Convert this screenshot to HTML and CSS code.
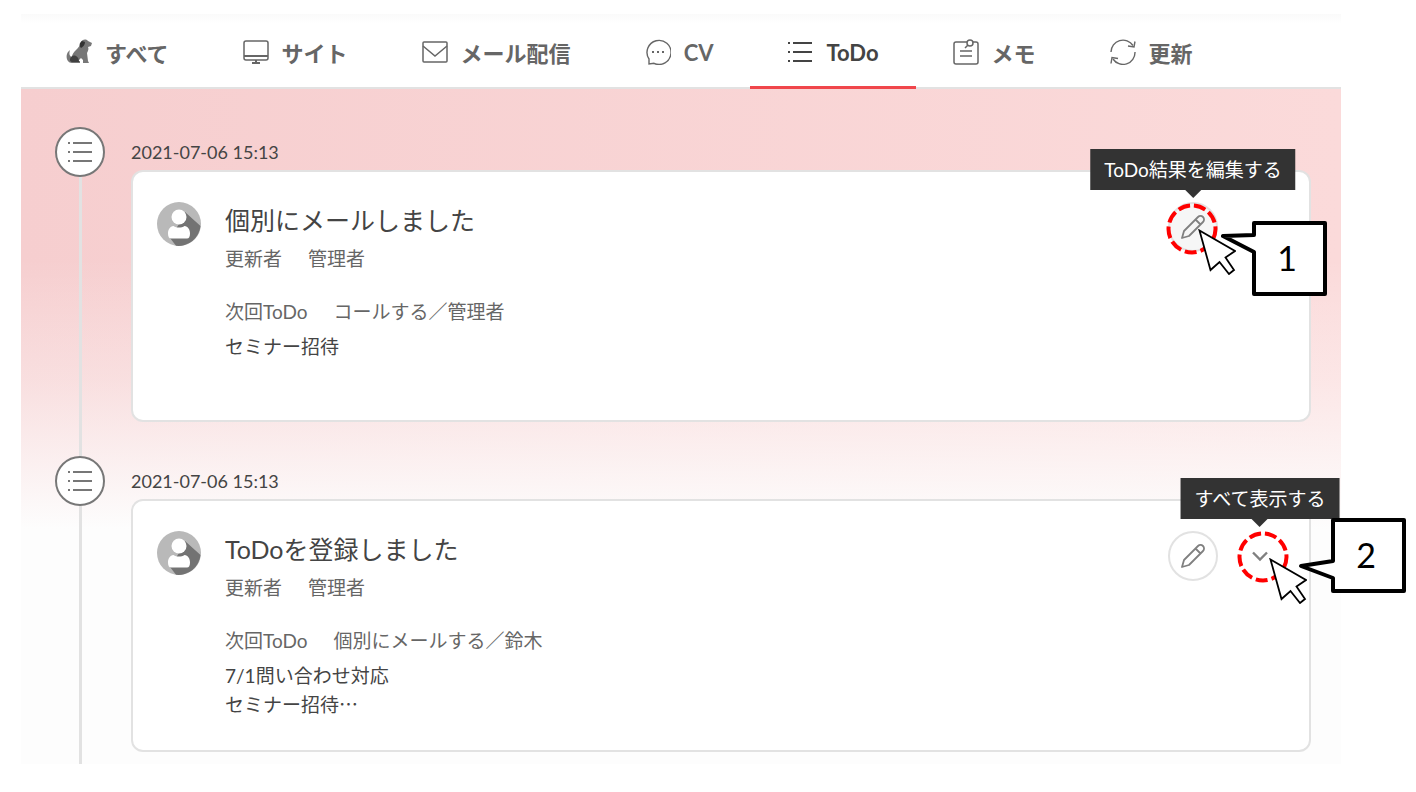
FILE: index.html
```html
<!DOCTYPE html>
<html lang="ja">
<head>
    <meta charset="UTF-8">
    <meta name="viewport" content="width=device-width, initial-scale=1.0">
    <title>ToDo</title>
    <link rel="stylesheet" href="styles.css">
</head>
<body>
    <!-- shared icons -->
    <svg class="sprite" aria-hidden="true">
        <symbol id="icon-list" viewBox="0 0 26 26">
            <path d="M1 4h2M1 13h2M1 22h2M6 4h19M6 13h19M6 22h19" fill="none" stroke="currentColor" stroke-width="2"/>
        </symbol>
        <symbol id="icon-pencil" viewBox="0 0 26 26">
            <path d="M2 24l2-7L18 3a3.2 3.2 0 0 1 5 5L9 22zM15.500 5.500l5 5" fill="none" stroke="currentColor" stroke-width="1.800" stroke-linejoin="round"/>
        </symbol>
        <symbol id="icon-user" viewBox="0 0 44 44">
            <circle cx="22" cy="22" r="22" fill="#b9b9b9"/>
            <path d="M28 10L43.500 24A22 22 0 0 1 19 43.800L13 36L22 22z" fill="#737373"/>
            <circle cx="22" cy="15" r="7.500" fill="#fff"/>
            <path d="M11 31.500c0-4 2-7 5.500-7.500 3 2 8 2 11 0 3.500.500 5.500 3.500 5.500 7.500 0 3-1 5-3 5H14c-2 0-3-2-3-5z" fill="#fff"/>
        </symbol>
        <symbol id="icon-cursor" viewBox="0 0 38 46">
            <path d="M1.500 1.500L37 22 27.500 28.500 36 41 31 45 21.500 33 12.500 41z" fill="#fff" stroke="#000" stroke-width="1.800"/>
        </symbol>
    </svg>

    <main class="panel">
        <nav class="tabs">
            <a class="tab" href="#all">
                <svg class="tab-icon" viewBox="0 0 26 26">
                    <path d="M3 12C-1 15 0 24 6 24h8v-2h-2l3-3 2 2v3h6l-1-2-1-8c1-2 2-4 1-6l3-1 1-3-4-2c-2-2-5-2-7 1-1 4-3 6-5 8-2 2-4 4-4 7-3-1-3-4-2-7z" fill="#777"/>
                    <path d="M16 2c-3 2-3 5-1 7 2-1 4-3 4-6z" fill="#333"/>
                    <path d="M5 18c3-3 8-1 8 5H7c-3 0-4-2-2-5z" fill="#404040"/>
                </svg>
                すべて
            </a>
            <a class="tab" href="#site">
                <svg class="tab-icon" viewBox="0 0 26 26" fill="none" stroke="currentColor" stroke-width="1.500">
                    <rect x="1" y="2" width="24" height="19" rx="2"/>
                    <path d="M1 17h24M9 24h8M13 21v3" stroke-width="2"/>
                </svg>
                サイト
            </a>
            <a class="tab" href="#mail">
                <svg class="tab-icon" viewBox="0 0 26 26" fill="none" stroke="currentColor" stroke-width="1.500">
                    <rect x="1" y="3" width="24" height="20" rx="1"/>
                    <path d="M1 7l12 10L25 7"/>
                </svg>
                メール配信
            </a>
            <a class="tab" href="#cv">
                <svg class="tab-icon" viewBox="0 0 26 26" fill="none" stroke="currentColor" stroke-width="1.400">
                    <path d="M4 25v-5A12 12 0 1 1 9 24.300z"/>
                    <path d="M7 13h2M12 13h2M17 13h2" stroke-width="2"/>
                </svg>
                CV
            </a>
            <a class="tab tab-active" href="#todo" aria-current="page">
                <svg class="tab-icon"><use href="#icon-list"/></svg>
                ToDo
            </a>
            <a class="tab" href="#memo">
                <svg class="tab-icon" viewBox="0 0 26 26" fill="none" stroke="currentColor" stroke-width="1.500">
                    <path d="M14 3H3a2 2 0 0 0-2 2v18a2 2 0 0 0 2 2h20a2 2 0 0 0 2-2V5a2 2 0 0 0-2-2h-3"/>
                    <circle cx="17" cy="4" r="3"/>
                    <path d="M15 6l-3 3M7 12h12M7 17h12"/>
                </svg>
                メモ
            </a>
            <a class="tab" href="#update">
                <svg class="tab-icon" viewBox="0 0 26 26" fill="none" stroke="currentColor" stroke-width="1.400">
                    <path d="M1 13A12 12 0 0 1 23 6.500M25 13A12 12 0 0 1 3 20"/>
                    <path d="M25 2.500l-1 5.500-6-1M1 24.500l1-6 6 1"/>
                </svg>
                更新
            </a>
        </nav>

        <ol class="timeline">
            <li class="entry">
                <div class="marker">
                    <span class="marker-dot"><svg class="marker-icon"><use href="#icon-list"/></svg></span>
                </div>
                <div class="entry-body">
                    <time class="entry-date" datetime="2021-07-06T15:13">2021-07-06 15:13</time>
                    <article class="card">
                        <svg class="avatar" aria-hidden="true"><use href="#icon-user"/></svg>
                        <div class="card-text">
                            <h2 class="card-title">個別にメールしました</h2>
                            <p class="card-meta"><span>更新者</span><span>管理者</span></p>
                            <p class="card-meta card-next"><span>次回ToDo</span><span>コールする／管理者</span></p>
                            <p class="card-note">セミナー招待</p>
                        </div>
                        <div class="actions">
                            <div class="action">
                                <button class="action-button action-hover" type="button" aria-labelledby="tip-edit">
                                    <svg class="action-icon"><use href="#icon-pencil"/></svg>
                                </button>
                                <span class="tooltip" id="tip-edit" role="tooltip">ToDo結果を編集する</span>
                                <svg class="callout callout-edit" viewBox="0 0 168 100">
                                    <circle class="callout-ring" cx="29" cy="30" r="23.500"/>
                                    <use href="#icon-cursor" x="35" y="30" width="38" height="46"/>
                                    <path class="callout-box" d="M91 24h71v71H91V53L60 37l31-1z"/>
                                    <text class="callout-number" x="124" y="72">1</text>
                                </svg>
                            </div>
                        </div>
                    </article>
                </div>
            </li>

            <li class="entry">
                <div class="marker">
                    <span class="marker-dot"><svg class="marker-icon"><use href="#icon-list"/></svg></span>
                </div>
                <div class="entry-body">
                    <time class="entry-date" datetime="2021-07-06T15:13">2021-07-06 15:13</time>
                    <article class="card">
                        <svg class="avatar" aria-hidden="true"><use href="#icon-user"/></svg>
                        <div class="card-text">
                            <h2 class="card-title">ToDoを登録しました</h2>
                            <p class="card-meta"><span>更新者</span><span>管理者</span></p>
                            <p class="card-meta card-next"><span>次回ToDo</span><span>個別にメールする／鈴木</span></p>
                            <p class="card-note">7/1問い合わせ対応<br>セミナー招待<span class="ellipsis">…</span></p>
                        </div>
                        <div class="actions">
                            <div class="action">
                                <button class="action-button" type="button" aria-label="編集">
                                    <svg class="action-icon"><use href="#icon-pencil"/></svg>
                                </button>
                            </div>
                            <div class="action">
                                <button class="action-button action-plain" type="button" aria-labelledby="tip-more">
                                    <svg class="action-icon" viewBox="0 0 26 26">
                                        <path d="M6 9.500l7 7 7-7" fill="none" stroke="currentColor" stroke-width="2.400"/>
                                    </svg>
                                </button>
                                <span class="tooltip" id="tip-more" role="tooltip">すべて表示する</span>
                                <svg class="callout callout-more" viewBox="0 0 173 92">
                                    <circle class="callout-ring" cx="28" cy="41" r="23.500"/>
                                    <use href="#icon-cursor" x="34" y="42" width="38" height="46"/>
                                    <path class="callout-box" d="M98 4h71v71H98V62L66 50l32-5z"/>
                                    <text class="callout-number" x="131" y="52">2</text>
                                </svg>
                            </div>
                        </div>
                    </article>
                </div>
            </li>
        </ol>
    </main>
</body>
</html>
```

FILE: styles.css
```css
* {
    box-sizing: border-box;
}
body {
    margin: 0;
    padding: 14px 75px 29px 21px;
    background-color: #fff;
    color: #444;
    font-family: Lato, "Noto Sans CJK JP", sans-serif;
    font-size: 19px;
}
.sprite {
    position: absolute;
    width: 0;
    height: 0;
}
.tabs {
    display: flex;
    height: 75px;
    padding-left: 8px;
    border-bottom: 2px solid #e2e2e2;
    background: linear-gradient(#fafafa, #fff 10px);
}
.tab {
    display: flex;
    align-items: center;
    gap: 13px;
    height: 75px;
    padding: 4px 37px 0;
    border-bottom: 3px solid transparent;
    color: #666;
    font-size: 22px;
    font-weight: bold;
    text-decoration: none;
    white-space: nowrap;
}
.tab-active {
    border-bottom-color: #f0464b;
    color: #444;
}
.tab-icon {
    width: 26px;
    height: 26px;
    flex: none;
}
.timeline {
    margin: 0;
    padding: 38px 30px 0 34px;
    list-style: none;
    background:
        linear-gradient(rgba(253, 253, 253, 0) 170px, rgba(253, 253, 253, 0.35) 290px, #fdfdfd 440px),
        linear-gradient(to right, #f6cecf, #fbdada);
}
.entry {
    display: flex;
    gap: 26px;
}
.marker {
    display: flex;
    flex-direction: column;
    align-items: center;
    width: 50px;
    flex: none;
}
.marker::after {
    content: "";
    flex: 1;
    width: 3px;
    background-color: #e2e2e2;
}
.marker-dot {
    display: flex;
    align-items: center;
    justify-content: center;
    width: 50px;
    height: 50px;
    border: 2px solid #777;
    border-radius: 50%;
    background-color: #fff;
    color: #777;
}
.marker-icon {
    width: 26px;
    height: 26px;
}
.entry-body {
    flex: 1;
    padding-bottom: 34px;
}
.entry:last-child .entry-body {
    padding-bottom: 12px;
}
.entry-date {
    display: block;
    padding-top: 7px;
    font-size: 18px;
    line-height: 36px;
}
.card {
    display: flex;
    gap: 24px;
    padding: 30px 24px 31px;
    border: 2px solid #e2e2e2;
    border-radius: 12px;
    background-color: #fff;
}
.avatar {
    width: 44px;
    height: 44px;
    flex: none;
}
.card-text {
    flex: 1;
}
.card-title {
    margin: 0;
    font-size: 25px;
    font-weight: normal;
    line-height: 36px;
}
.card-meta {
    display: flex;
    gap: 26px;
    margin: 7px 0 0;
    color: #666;
    line-height: 28px;
}
.card-next {
    margin-top: 25px;
}
.card-note {
    min-height: 56px;
    margin: 7px 0 0;
    line-height: 28px;
}
.ellipsis {
    font-family: "Noto Sans CJK JP", sans-serif;
}
.actions {
    display: grid;
    grid-template-columns: 50px 50px;
    gap: 17px;
    align-items: start;
}
.action {
    position: relative;
}
.action-button {
    display: flex;
    align-items: center;
    justify-content: center;
    width: 50px;
    height: 50px;
    padding: 0;
    border: 2px solid #e2e2e2;
    border-radius: 50%;
    background-color: #fff;
    color: #808080;
    cursor: pointer;
}
.action-hover {
    background-color: #f6f6f6;
}
.action-plain {
    border-color: transparent;
}
.action-icon {
    width: 26px;
    height: 26px;
}
.tooltip {
    position: absolute;
    bottom: 62px;
    left: 50%;
    transform: translateX(-50%);
    padding: 0 14px;
    background-color: #333;
    color: #fff;
    line-height: 41px;
    white-space: nowrap;
}
.tooltip::after {
    content: "";
    position: absolute;
    top: 100%;
    left: 50%;
    margin-left: -8px;
    border: 8px solid transparent;
    border-top-color: #333;
    border-bottom: 0;
}

/* numbered callouts over the action buttons */
.callout {
    position: absolute;
    overflow: visible;
    pointer-events: none;
}
.callout-edit {
    top: -3px;
    left: -5px;
    width: 168px;
    height: 100px;
}
.callout-more {
    top: -15px;
    left: 0;
    width: 173px;
    height: 92px;
}
.callout-ring {
    fill: none;
    stroke: #f00;
    stroke-width: 4px;
    stroke-dasharray: 12 4;
}
.callout-box {
    fill: #fff;
    stroke: #000;
    stroke-width: 4px;
    stroke-linejoin: round;
}
.callout-number {
    fill: #000;
    font-size: 34px;
    text-anchor: middle;
}
```
